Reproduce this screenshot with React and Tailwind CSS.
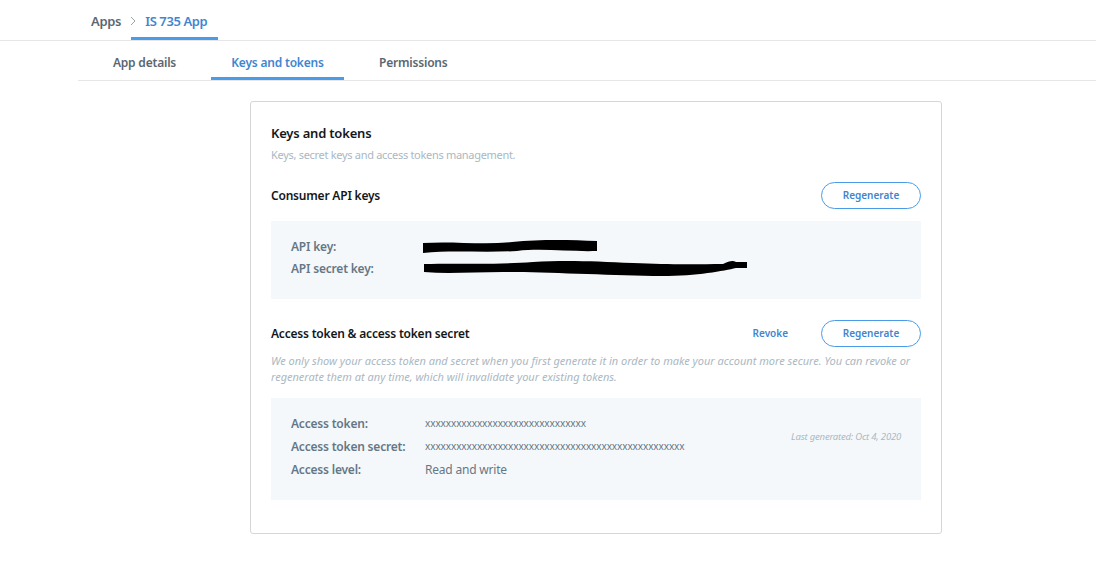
import React from "react";

function Scribble({ width, height, d }) {
  return (
    <svg width={width} height={height} viewBox={`0 0 ${width} ${height}`} className="block">
      <path d={d} fill="black" />
    </svg>
  );
}

function OutlineButton({ children }) {
  return (
    <button className="w-[100px] h-[27px] rounded-full border border-[#4a9ce8] text-[10px] text-[#3f86d0] font-semibold bg-white">
      {children}
    </button>
  );
}

export default function App() {
  return (
    <div
      className="w-[1096px] h-[588px] bg-white text-[#14171a] overflow-hidden"
      style={{ fontFamily: '"Noto Sans", "Open Sans", sans-serif' }}
    >
      {/* breadcrumb */}
      <div className="h-[41px] border-b border-[#e6e6e6] flex items-end pl-[91px]">
        <div className="flex items-center h-[40px] text-[13px] font-semibold">
          <span className="text-[#5b6770] tracking-[-0.3px] pt-[3px]">Apps</span>
          <svg width="6" height="10" viewBox="0 0 6 10" className="ml-[9px] mt-[2px]">
            <path d="M1 1 L5 5 L1 9" fill="none" stroke="#9aa4ab" strokeWidth="1" />
          </svg>
          <div className="ml-[-5px] pl-[14px] pr-[11px] h-full flex items-center border-b-[3px] border-[#4a9ce8] pt-[6px]">
            <span className="text-[#3f86d0] tracking-[-0.4px]">IS 735 App</span>
          </div>
        </div>
      </div>

      {/* tabs */}
      <div className="ml-[78px] h-[40px] border-b border-[#e6e6e6] flex text-[12px] font-semibold tracking-[-0.2px]">
        <div className="w-[133px] flex items-center justify-center text-[#5b6770] pt-[4px]">App details</div>
        <div className="w-[133px] flex items-center justify-center text-[#3f86d0] border-b-[3px] border-[#4a9ce8] pt-[7px]">
          Keys and tokens
        </div>
        <div className="pl-[35px] flex items-center text-[#5b6770] pt-[4px]">Permissions</div>
      </div>

      {/* card */}
      <div className="ml-[250px] mt-[20px] w-[692px] h-[433px] border border-[#d6d6d6] rounded-[3px] px-[20px] pt-[22px]">
        <h2 className="text-[13px] font-semibold tracking-[-0.2px]">Keys and tokens</h2>
        <p className="text-[11px] text-[#aab8c2] mt-[3px] tracking-[-0.3px]">
          Keys, secret keys and access tokens management.
        </p>

        <div className="flex items-center justify-between mt-[19px]">
          <h3 className="text-[12px] font-semibold tracking-[-0.2px]">Consumer API keys</h3>
          <OutlineButton>Regenerate</OutlineButton>
        </div>

        <div className="mt-[12px] h-[78px] bg-[#f5f8fa] px-[20px] pt-[15px] text-[12px] font-semibold text-[#657786] tracking-[-0.2px]">
          <div className="flex items-center h-[22px]">
            <span className="w-[131px]">API key:</span>
            <Scribble
              width={176}
              height={16}
              d="M1 4 C30 2 60 6 90 3 C120 0 150 1 175 2 L175 12 C150 13 120 9 95 12 C60 14 30 11 1 14 Z"
            />
          </div>
          <div className="flex items-center h-[22px]">
            <span className="w-[132px]">API secret key:</span>
            <Scribble
              width={325}
              height={22}
              d="M1 6 C40 5 70 7 110 4 C140 2 170 3 210 5 C250 7 280 6 300 6 C306 3 310 2 313 4 L324 4 L324 10 L313 10 C300 13 270 19 230 18 C180 17 120 14 80 14 C50 14 25 16 1 14 Z"
            />
          </div>
        </div>

        <div className="flex items-center justify-between mt-[21px]">
          <h3 className="text-[12px] font-semibold tracking-[-0.2px]">Access token &amp; access token secret</h3>
          <div className="flex items-center">
            <span className="text-[10px] font-semibold text-[#3f86d0] mr-[33px]">Revoke</span>
            <OutlineButton>Regenerate</OutlineButton>
          </div>
        </div>

        <p className="mt-[6px] text-[11px] italic text-[#aab8c2] leading-[16px] tracking-[0px] pr-[10px]">
          We only show your access token and secret when you first generate it in order to make your account more
          secure. You can revoke or regenerate them at any time, which will invalidate your existing tokens.
        </p>

        <div className="mt-[13px] h-[102px] bg-[#f5f8fa] px-[20px] pt-[14px] flex text-[12px] tracking-[-0.2px]">
          <div className="flex-1">
            <div className="flex items-center h-[23px]">
              <span className="w-[134px] font-semibold text-[#657786]">Access token:</span>
              <span className="text-[10px] text-[#657786] tracking-[-0.1px]">xxxxxxxxxxxxxxxxxxxxxxxxxxxxxxx</span>
            </div>
            <div className="flex items-center h-[23px]">
              <span className="w-[134px] font-semibold text-[#657786]">Access token secret:</span>
              <span className="text-[10px] text-[#657786] tracking-[-0.1px]">
                xxxxxxxxxxxxxxxxxxxxxxxxxxxxxxxxxxxxxxxxxxxxxxxxxx
              </span>
            </div>
            <div className="flex items-center h-[23px]">
              <span className="w-[134px] font-semibold text-[#657786]">Access level:</span>
              <span className="text-[#657786]">Read and write</span>
            </div>
          </div>
          <div className="pt-[18px] text-[9.5px] italic text-[#aab8c2]">Last generated: Oct 4, 2020</div>
        </div>
      </div>
    </div>
  );
}
